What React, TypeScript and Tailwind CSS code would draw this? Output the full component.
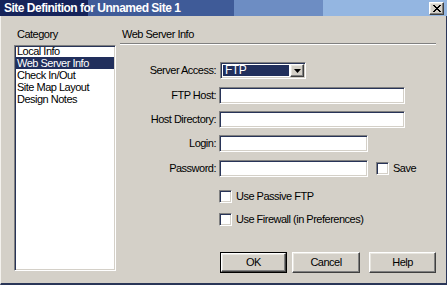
import React from 'react'

const font = "font-['Liberation_Sans',Arial,sans-serif]"
const sunken =
  'border border-t-[#808080] border-l-[#808080] border-r-white border-b-white shadow-[inset_1px_1px_0_#283458,inset_-1px_-1px_0_#d4d0c8]'
const raised =
  'border border-t-white border-l-white border-r-[#404040] border-b-[#404040] shadow-[inset_-1px_-1px_0_#808080,inset_1px_1px_0_#e8e6e0]'

const categories = ['Local Info', 'Web Server Info', 'Check In/Out', 'Site Map Layout', 'Design Notes']

function TextInput({ width }: { width: string }) {
  return <div className={`${sunken} ${width} h-[17px] bg-white`} />
}

function Checkbox() {
  return <div className={`${sunken} w-[13px] h-[13px] bg-white shrink-0`} />
}

function Button({ label, primary, width }: { label: string; primary?: boolean; width: string }) {
  return (
    <div className={`${width} h-[21px] ${primary ? 'border border-black' : ''}`}>
      <div className={`${raised} h-full flex items-center justify-center bg-[#d4d0c8]`}>{label}</div>
    </div>
  )
}

function Row({ label, children, top }: { label: string; children: React.ReactNode; top: string }) {
  return (
    <div className={`flex items-center ${top}`}>
      <div className="w-[97px] text-right pr-[1px] whitespace-nowrap">{label}</div>
      <div className="ml-[2px] flex items-center">{children}</div>
    </div>
  )
}

export default function App() {
  return (
    <div className={`${font} w-[447px] h-[285px] bg-[#d4d0c8] flex flex-col text-[11px] leading-[13px] tracking-[-0.5px] text-black overflow-hidden`}>
      {/* Title bar */}
      <div className="h-[16px] shrink-0 flex items-center bg-[linear-gradient(90deg,#15235a_0,#15235a_88px,#3f5b98_88px,#3f5b98_234px,#6d8dc3_234px,#6d8dc3_323px,#94b6e1_323px)]">
        <span className="pl-[4px] text-white font-bold text-[12px] leading-[14px] whitespace-nowrap">
          Site Definition for Unnamed Site 1
        </span>
        <div className={`${raised} ml-auto mr-[3px] w-[15px] h-[13px] bg-[#d4d0c8] flex items-center justify-center`}>
          <svg width="8" height="7" viewBox="0 0 8 7">
            <path d="M0 0L7 7M1 0L8 7M7 0L0 7M8 0L1 7" stroke="black" strokeWidth="1" />
          </svg>
        </div>
      </div>

      {/* Body */}
      <div className="flex-1 flex border-l border-l-[#f4f2ee] border-r border-r-[#2a3658] border-b-2 border-b-[#2a3658] pl-[13px]">
        {/* Category column */}
        <div className="w-[102px] flex flex-col">
          <div className="mt-[12px] pl-[3px] h-[13px]">Category</div>
          <div className={`${sunken} mt-[4px] h-[226px] bg-white overflow-hidden`}>
            <div className="-mt-[2px] pt-[1px]">
              {categories.map((c) => (
                <div
                  key={c}
                  className={`h-[12px] leading-[12px] pl-[1px] mx-[1px] whitespace-nowrap ${
                    c === 'Web Server Info' ? 'bg-[#212f5c] text-white' : ''
                  }`}
                >
                  {c}
                </div>
              ))}
            </div>
          </div>
        </div>

        {/* Settings column */}
        <div className="ml-[4px] w-[316px] flex flex-col">
          <div className="mt-[12px] pl-[2px] h-[13px]">Web Server Info</div>
          <div className="mt-[2px] h-[2px] border-t border-t-[#808080] border-b border-b-white" />

          <Row label="Server Access:" top="mt-[17px]">
            <div className={`${sunken} ml-[1px] w-[86px] h-[17px] flex bg-white p-[1px]`}>
              <div className="flex-1 bg-[#212f5c] shadow-[inset_0_0_0_1px_white] text-white pl-[3px] text-[12px] leading-[13px]">FTP</div>
              <div className={`${raised} w-[14px] bg-[#d4d0c8] flex items-center justify-center`}>
                <svg width="7" height="4" viewBox="0 0 7 4">
                  <path d="M0 0H7L3.5 4Z" fill="black" />
                </svg>
              </div>
            </div>
          </Row>
          <Row label="FTP Host:" top="mt-[8px]">
            <TextInput width="w-[186px]" />
          </Row>
          <Row label="Host Directory:" top="mt-[7px]">
            <TextInput width="w-[186px]" />
          </Row>
          <Row label="Login:" top="mt-[7px]">
            <TextInput width="w-[149px]" />
          </Row>
          <Row label="Password:" top="mt-[8px]">
            <TextInput width="w-[149px]" />
            <div className="ml-[8px]">
              <Checkbox />
            </div>
            <span className="ml-[4px]">Save</span>
          </Row>
          <Row label="" top="mt-[13px]">
            <Checkbox />
            <span className="ml-[4px] whitespace-nowrap">Use Passive FTP</span>
          </Row>
          <Row label="" top="mt-[10px]">
            <Checkbox />
            <span className="ml-[4px] whitespace-nowrap">Use Firewall (in Preferences)</span>
          </Row>

          <div className="mt-[26px] pl-[100px] flex">
            <Button label="OK" primary width="w-[68px]" />
            <div className="ml-[5px]">
              <Button label="Cancel" width="w-[68px]" />
            </div>
            <div className="ml-[9px]">
              <Button label="Help" width="w-[67px]" />
            </div>
          </div>
        </div>
      </div>
    </div>
  )
}
